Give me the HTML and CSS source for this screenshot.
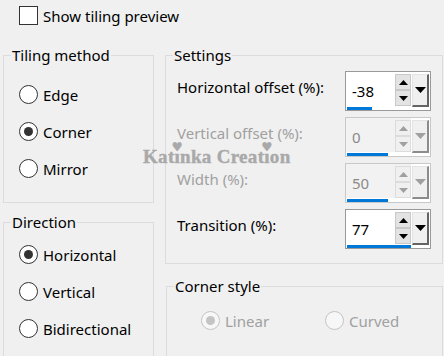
FILE: index.html
```html
<!DOCTYPE html>
<html lang="en">
<head>
  <meta charset="UTF-8" />
  <title>Seamless Tiling</title>
  <link rel="stylesheet" href="styles.css">
</head>
<body>

  <div class="dialog">
    <label class="check-row"><span class="checkbox"></span>Show tiling preview</label>

    <div class="columns">
      <div class="col">
        <fieldset class="group tiling">
          <legend>Tiling method</legend>
          <div class="radio-list">
            <div class="radio-row"><span class="radio"></span>Edge</div>
            <div class="radio-row"><span class="radio on"></span>Corner</div>
            <div class="radio-row"><span class="radio"></span>Mirror</div>
          </div>
        </fieldset>

        <fieldset class="group direction">
          <legend>Direction</legend>
          <div class="radio-list">
            <div class="radio-row"><span class="radio on"></span>Horizontal</div>
            <div class="radio-row"><span class="radio"></span>Vertical</div>
            <div class="radio-row"><span class="radio"></span>Bidirectional</div>
          </div>
        </fieldset>
      </div>

      <div class="col">
        <fieldset class="group settings">
          <legend>Settings</legend>
          <div class="setting-rows">

            <div class="setting">
              <span class="setting-label">Horizontal offset (%):</span>
              <div class="spin">
                <div class="spin-main">
                  <div class="spin-top">
                    <span class="spin-value">-38</span>
                    <span class="spin-buttons">
                      <span class="spin-btn"><svg width="9" height="5" viewBox="0 0 9 5"><path d="M0 5L4.5 0L9 5Z"/></svg></span>
                      <span class="spin-btn"><svg width="9" height="5" viewBox="0 0 9 5"><path d="M0 0L4.5 5L9 0Z"/></svg></span>
                    </span>
                  </div>
                  <div class="spin-bar"><span class="spin-fill" style="width:25px"></span></div>
                </div>
                <span class="spin-drop"><svg width="11" height="6" viewBox="0 0 11 6"><path d="M0 0L5.5 6L11 0Z"/></svg></span>
              </div>
            </div>

            <div class="setting disabled">
              <span class="setting-label">Vertical offset (%):</span>
              <div class="spin">
                <div class="spin-main">
                  <div class="spin-top">
                    <span class="spin-value">0</span>
                    <span class="spin-buttons">
                      <span class="spin-btn"><svg width="9" height="5" viewBox="0 0 9 5"><path d="M0 5L4.5 0L9 5Z"/></svg></span>
                      <span class="spin-btn"><svg width="9" height="5" viewBox="0 0 9 5"><path d="M0 0L4.5 5L9 0Z"/></svg></span>
                    </span>
                  </div>
                  <div class="spin-bar"><span class="spin-fill" style="width:41px"></span></div>
                </div>
                <span class="spin-drop"><svg width="11" height="6" viewBox="0 0 11 6"><path d="M0 0L5.5 6L11 0Z"/></svg></span>
              </div>
            </div>

            <div class="setting disabled">
              <span class="setting-label">Width (%):</span>
              <div class="spin">
                <div class="spin-main">
                  <div class="spin-top">
                    <span class="spin-value">50</span>
                    <span class="spin-buttons">
                      <span class="spin-btn"><svg width="9" height="5" viewBox="0 0 9 5"><path d="M0 5L4.5 0L9 5Z"/></svg></span>
                      <span class="spin-btn"><svg width="9" height="5" viewBox="0 0 9 5"><path d="M0 0L4.5 5L9 0Z"/></svg></span>
                    </span>
                  </div>
                  <div class="spin-bar"><span class="spin-fill" style="width:41px"></span></div>
                </div>
                <span class="spin-drop"><svg width="11" height="6" viewBox="0 0 11 6"><path d="M0 0L5.5 6L11 0Z"/></svg></span>
              </div>
            </div>

            <div class="setting">
              <span class="setting-label">Transition (%):</span>
              <div class="spin">
                <div class="spin-main">
                  <div class="spin-top">
                    <span class="spin-value">77</span>
                    <span class="spin-buttons">
                      <span class="spin-btn"><svg width="9" height="5" viewBox="0 0 9 5"><path d="M0 5L4.5 0L9 5Z"/></svg></span>
                      <span class="spin-btn"><svg width="9" height="5" viewBox="0 0 9 5"><path d="M0 0L4.5 5L9 0Z"/></svg></span>
                    </span>
                  </div>
                  <div class="spin-bar"><span class="spin-fill" style="width:64px"></span></div>
                </div>
                <span class="spin-drop"><svg width="11" height="6" viewBox="0 0 11 6"><path d="M0 0L5.5 6L11 0Z"/></svg></span>
              </div>
            </div>

          </div>
        </fieldset>

        <fieldset class="group corner">
          <legend>Corner style</legend>
          <div class="corner-list">
            <div class="radio-row off"><span class="radio on"></span>Linear</div>
            <div class="radio-row off"><span class="radio"></span>Curved</div>
          </div>
        </fieldset>
      </div>
    </div>

    <!-- watermark over the dialog -->
    <div class="watermark">Kat<span class="heart-i">ı</span>nka Creat<span class="heart-i">ı</span>on</div>
  </div>

</body>
</html>
```

FILE: styles.css
```css
html, body {
  margin: 0;
  height: 100%;
  overflow: hidden;
}
body {
  background: #f0f0f0;
  font-family: "Noto Sans", "Open Sans", sans-serif;
  font-size: 15px;
  line-height: 20px;
  color: #000;
}
.dialog {
  position: relative;
}
.check-row {
  display: flex;
  align-items: center;
  gap: 5px;
  height: 19px;
  margin: 6px 0 0 19px;
}
.checkbox {
  width: 19px;
  height: 19px;
  box-sizing: border-box;
  border: 1px solid #333;
  background: #fff;
}
.columns {
  display: grid;
  grid-template-columns: 151px 278px;
  column-gap: 11px;
  padding-left: 3px;
  margin-top: 20px;
}
.group {
  margin: 0;
  padding: 0 0 0 7px;
  border: 1px solid #dcdcdc;
  min-width: 0;
}
.group legend {
  padding: 0 1px;
  line-height: 20px;
}
.radio-list {
  display: flex;
  flex-direction: column;
  gap: 18px;
  padding: 20px 0 24px 8px;
}
.direction {
  margin-top: 9px;
}
.direction .radio-list {
  padding-top: 13px;
  padding-bottom: 60px;
}
.radio-row {
  display: flex;
  align-items: center;
  gap: 5px;
  height: 19px;
}
.radio {
  width: 19px;
  height: 19px;
  box-sizing: border-box;
  border: 1px solid #333;
  border-radius: 50%;
  background: #fff;
  display: grid;
  place-items: center;
}
.radio.on::after {
  content: "";
  width: 9px;
  height: 9px;
  border-radius: 50%;
  background: #333;
}
.radio-row.off {
  color: #a0a0a0;
}
.radio-row.off .radio {
  border-color: #c4c4c4;
  background: #f7f7f7;
}
.radio-row.off .radio.on::after {
  background: #c4c4c4;
}

/* settings */
.setting-rows {
  display: flex;
  flex-direction: column;
  gap: 6px;
  padding: 6px 11px 14px 4px;
}
.setting {
  display: flex;
  justify-content: space-between;
  align-items: flex-start;
}
.setting-label {
  padding-top: 6px;
}
.setting.disabled .setting-label {
  color: #a0a0a0;
}
.spin {
  display: flex;
  width: 86px;
  height: 40px;
  box-sizing: border-box;
  border: 1px solid #999;
  background: #fff;
}
.spin-main {
  width: 65px;
  display: flex;
  flex-direction: column;
}
.spin-top {
  display: flex;
  height: 34px;
}
.spin-value {
  flex: 1;
  padding: 9px 0 0 6px;
}
.spin-buttons {
  width: 16px;
  padding-top: 2px;
  display: flex;
  flex-direction: column;
}
.spin-btn {
  height: 16px;
  box-sizing: border-box;
  border: 1px solid #c8c8c8;
  background: #e3e3e3;
  display: grid;
  place-items: center;
}
.spin-bar {
  height: 4px;
  padding-top: 1px;
  box-sizing: border-box;
}
.spin-fill {
  display: block;
  height: 3px;
  margin-left: 1px;
  background: #0078d7;
}
.spin-drop {
  width: 17px;
  height: 33px;
  margin: 2px 0 0 1px;
  box-sizing: border-box;
  border-top: 1px solid #e3e3e3;
  border-left: 1px solid #e3e3e3;
  border-right: 2px solid #646464;
  border-bottom: 2px solid #646464;
  background: #f0f0f0;
  display: grid;
  place-items: center;
}
.spin path {
  fill: #000;
}
.setting.disabled .spin {
  border-color: #c8c8c8;
}
.setting.disabled .spin-top {
  background: #f2f2f2;
}
.setting.disabled .spin-value {
  color: #8a8a8a;
}
.setting.disabled .spin-btn {
  background: #f0f0f0;
  border-color: #dcdcdc;
}
.setting.disabled .spin-drop {
  border-right-color: #8c8c8c;
  border-bottom-color: #8c8c8c;
}
.setting.disabled path {
  fill: #a0a0a0;
}

.corner {
  margin: 12px 0 0 1px;
}
.corner-list {
  display: grid;
  grid-template-columns: 124px auto;
  padding: 15px 0 60px 27px;
}

.watermark {
  position: absolute;
  left: 143px;
  top: 141px;
  font-family: "Liberation Serif", serif;
  font-weight: bold;
  font-size: 19px;
  letter-spacing: 0.3px;
  color: #a9a9a9;
  -webkit-text-stroke: 0.4px #a9a9a9;
}
.heart-i {
  position: relative;
}
.heart-i::before {
  content: "♥";
  position: absolute;
  left: 50%;
  top: -9px;
  transform: translateX(-50%);
  font-family: "DejaVu Sans", sans-serif;
  font-size: 12px;
}
```
